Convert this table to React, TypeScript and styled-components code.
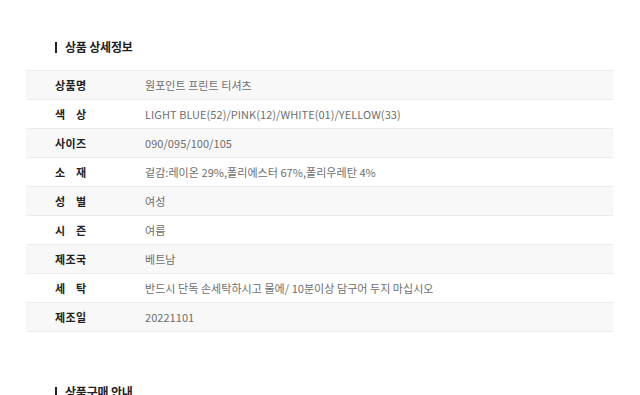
import React from 'react';
import styled, { createGlobalStyle } from 'styled-components';

const GlobalStyle = createGlobalStyle`
  html, body {
    margin: 0;
    padding: 0;
    background: #fff;
  }
  body {
    font-family: "Noto Sans CJK KR", "Noto Sans", sans-serif;
    color: #222;
  }
`;

const Page = styled.div`
  width: 640px;
  padding: 39px 27px 0 26px;
  box-sizing: border-box;
`;

const Section = styled.section`
  margin-bottom: 52px;
`;

const Title = styled.h3`
  display: flex;
  align-items: center;
  gap: 8px;
  margin: 0 0 15px 29px;
  font-size: 12px;
  font-weight: 700;
  line-height: 16px;
  color: #222;
  letter-spacing: -0.2px;

  &::before {
    content: '';
    display: block;
    width: 2px;
    height: 11px;
    background: #222;
  }
`;

const Table = styled.div`
  display: grid;
  grid-template-columns: 119px 1fr;
  border-top: 1px solid #ececec;
`;

const Row = styled.div<{ $shade: boolean }>`
  display: contents;

  & > div {
    background: ${props => (props.$shade ? '#f8f8f8' : '#fff')};
    border-bottom: 1px solid #ececec;
    height: 28px;
    display: flex;
    align-items: center;
  }
`;

const Label = styled.div`
  padding-left: 29px;
`;

const LabelText = styled.span`
  display: flex;
  justify-content: space-between;
  width: 31px;
  font-size: 11px;
  font-weight: 700;
  color: #222;
`;

const Value = styled.div`
  font-size: 11px;
  color: #6e6e6e;
  letter-spacing: 0.05px;
`;

const rows: [string, string][] = [
  ['상품명', '원포인트 프린트 티셔츠'],
  ['색상', 'LIGHT BLUE(52)/PINK(12)/WHITE(01)/YELLOW(33)'],
  ['사이즈', '090/095/100/105'],
  ['소재', '겉감:레이온 29%,폴리에스터 67%,폴리우레탄 4%'],
  ['성별', '여성'],
  ['시즌', '여름'],
  ['제조국', '베트남'],
  ['세탁', '반드시 단독 손세탁하시고 물에/ 10분이상 담구어 두지 마십시오'],
  ['제조일', '20221101'],
];

const App: React.FC = () => {
  return (
    <>
      <GlobalStyle />
      <Page>
        <Section>
          <Title>상품 상세정보</Title>
          <Table>
            {rows.map(([label, value], i) => (
              <Row key={label} $shade={i % 2 === 0}>
                <Label>
                  <LabelText>
                    {label.split('').map((ch, j) => (
                      <span key={j}>{ch}</span>
                    ))}
                  </LabelText>
                </Label>
                <Value>{value}</Value>
              </Row>
            ))}
          </Table>
        </Section>
        <Section>
          <Title>상품구매 안내</Title>
        </Section>
      </Page>
    </>
  );
};

export default App;
